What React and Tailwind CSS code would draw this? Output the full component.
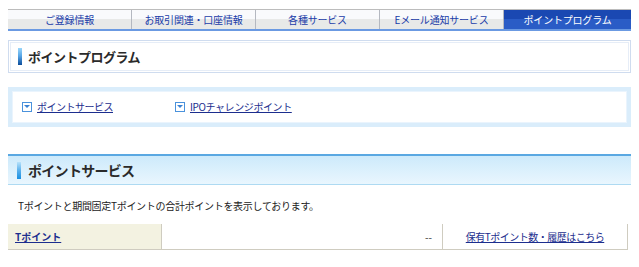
import React from 'react'

const FONT = { fontFamily: '"MS PGothic", "Noto Sans CJK JP", sans-serif' }

const TABS = ['ご登録情報', 'お取引関連・口座情報', '各種サービス', 'Eメール通知サービス', 'ポイントプログラム']

function Tabs() {
  return (
    <div className="mx-2 mt-[9px] border-t border-[#bcbcbc]">
      <div className="flex h-[21px] border-b-2 border-[#6b9ae2]">
        {TABS.map((t, i) => {
          const active = i === TABS.length - 1
          return (
            <div
              key={t}
              className={`w-[124px] flex items-center justify-center text-[10px] leading-none tracking-[-0.2px] ${
                active
                  ? 'flex-1 bg-[linear-gradient(#1a48b2_0%,#1a48b2_50%,#2a5cc6_50%,#2a5cc6_100%)] text-white'
                  : 'bg-[linear-gradient(#f9fafc_0%,#f9fafc_50%,#e8e9e8_50%,#e8e9e8_100%)] text-[#1a3ca8] border-r border-[#b4b8c0]'
              }`}
            >
              {t}
            </div>
          )
        })}
      </div>
    </div>
  )
}

function BlueBar({ dark }) {
  return (
    <span
      className={`inline-block w-[4px] h-[17px] ${
        dark
          ? 'bg-[linear-gradient(#9ad6fa,#5aa8e8_45%,#0c4c9a)]'
          : 'bg-[linear-gradient(#b8e2fa,#5ab0ec_50%,#1890e2)]'
      }`}
    />
  )
}

function LinkIcon() {
  return (
    <span className="w-[10px] h-[10px] border border-[#4a92dc] bg-white flex items-center justify-center shrink-0">
      <svg width="6" height="4" viewBox="0 0 6 4">
        <path d="M0 0H6L3 3Z" fill="#3a82d4" />
      </svg>
    </span>
  )
}

export default function App() {
  return (
    <div className="w-[639px] h-[267px] bg-white overflow-hidden text-[#333]" style={FONT}>
      <Tabs />

      {/* ページタイトル */}
      <div className="mx-2 mt-[9px] border border-[#cfdcef] p-px">
        <div className="border border-[#e6edf7] h-[29px] flex items-center gap-[6px] pl-[7px]">
          <BlueBar dark />
          <h1 className="text-[13px] font-bold text-[#2a2a2a] tracking-[-0.5px]">ポイントプログラム</h1>
        </div>
      </div>

      {/* リンク */}
      <div className="mx-2 mt-[14px] bg-[#daedfb] p-[4px] h-[40px]">
        <div className="bg-white border border-[#eaf4fd] h-full flex items-center pl-[9px]">
          <div className="flex items-center gap-[5px] w-[153px]">
            <LinkIcon />
            <a href="#" className="text-[10px] text-[#1c2e8e] underline leading-none tracking-[-0.5px]">ポイントサービス</a>
          </div>
          <div className="flex items-center gap-[5px]">
            <LinkIcon />
            <a href="#" className="text-[10px] text-[#1c2e8e] underline leading-none tracking-[-0.4px]">IPOチャレンジポイント</a>
          </div>
        </div>
      </div>

      {/* ポイントサービス */}
      <div className="mx-2 mt-[27px] border-t-2 border-b border-t-[#5aa8e2] border-b-[#aedaf2] bg-[linear-gradient(#cdeafb,#e9f6fe)] h-[31px] flex items-center gap-[7px] pl-[9px]">
        <BlueBar />
        <h2 className="text-[14px] font-semibold text-[#2a2a2a] tracking-[-0.7px]">ポイントサービス</h2>
      </div>

      <p className="mt-[16px] pl-[18px] text-[10px] leading-none text-[#222] tracking-[-0.3px]">
        Tポイントと期間固定Tポイントの合計ポイントを表示しております。
      </p>

      <div className="ml-2 mr-[11px] mt-[13px] flex h-[26px] border-b border-r border-[#cfccc0]">
        <div className="w-[154px] bg-[#f3f2e1] border-r border-[#cfccc0] flex items-center pl-[7px]">
          <a href="#" className="text-[10px] font-bold text-[#1c2e8e] underline leading-none">Tポイント</a>
        </div>
        <div className="w-[281px] border-r border-[#cfccc0] flex items-center justify-end pr-[10px] text-[10px]">
          --
        </div>
        <div className="flex-1 flex items-center justify-center">
          <a href="#" className="text-[10px] text-[#1c2e8e] underline leading-none tracking-[-0.5px]">保有Tポイント数・履歴はこちら</a>
        </div>
      </div>
    </div>
  )
}
